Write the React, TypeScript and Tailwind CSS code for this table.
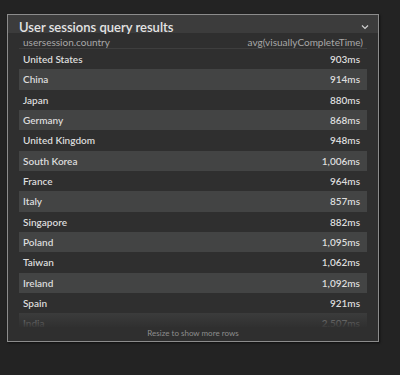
import type { JSX } from 'react';

const rows: [string, string][] = [
  ['United States', '903ms'],
  ['China', '914ms'],
  ['Japan', '880ms'],
  ['Germany', '868ms'],
  ['United Kingdom', '948ms'],
  ['South Korea', '1,006ms'],
  ['France', '964ms'],
  ['Italy', '857ms'],
  ['Singapore', '882ms'],
  ['Poland', '1,095ms'],
  ['Taiwan', '1,062ms'],
  ['Ireland', '1,092ms'],
  ['Spain', '921ms'],
  ['India', '2,507ms'],
];

export default function App(): JSX.Element {
  return (
    <div className="h-[375px] w-[400px] overflow-hidden bg-[#232323] pt-[14px] pl-[7px] font-['Lato',sans-serif]">
      <div className="flex h-[328px] w-[372px] flex-col border border-[#8c8c8c] bg-[#2f2f2f] shadow-[1px_1px_2px_rgba(0,0,0,0.6)]">
        {/* Title bar */}
        <div className="flex h-[18px] shrink-0 items-end justify-between bg-[#3c3c3c] pl-[11px] pr-[9px]">
          <span className="translate-y-[1px] text-[13px] font-semibold leading-none text-[#e4e4e4]">User sessions query results</span>
          <svg className="mb-[3px]" width="8" height="6" viewBox="0 0 8 6" fill="none" aria-hidden="true">
            <path d="M1 1.5l3 3 3-3" stroke="#cfcfcf" strokeWidth="1.2" />
          </svg>
        </div>

        {/* Column header */}
        <div className="mx-[11px] flex h-[16px] shrink-0 items-center justify-between border-b border-[#3e3e3e] px-[4px] pt-[2px] text-[10px] leading-none text-[#a8a8a8]">
          <span>usersession.country</span>
          <span>avg(visuallyCompleteTime)</span>
        </div>

        {/* Rows */}
        <div className="relative mx-[11px] h-[278px] shrink-0 overflow-hidden">
          {rows.map(([country, value], i) => (
            <div
              key={country}
              className={`flex h-[20.33px] items-center justify-between px-[4px] text-[10px] font-semibold leading-none text-[#dcdcdc] ${
                i % 2 === 1 ? 'bg-[#434444]' : ''
              }`}
            >
              <span>{country}</span>
              <span className="pr-[3px]">{value}</span>
            </div>
          ))}
          <div className="absolute inset-x-0 bottom-0 h-[14px] bg-gradient-to-b from-[#2f2f2f]/40 to-[#2f2f2f]/95" />
        </div>

        <div className="flex flex-1 items-center justify-center pb-[3px] text-[8px] leading-none text-[#8e8e8e]">
          Resize to show more rows
        </div>
      </div>
    </div>
  );
}
